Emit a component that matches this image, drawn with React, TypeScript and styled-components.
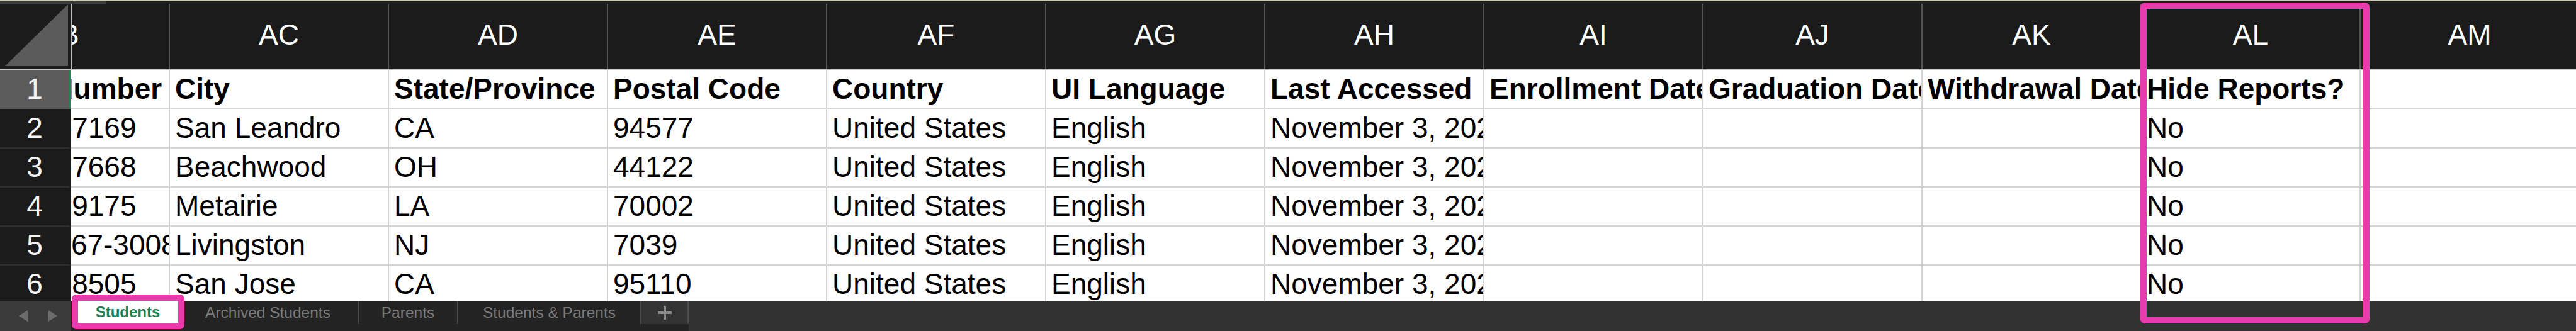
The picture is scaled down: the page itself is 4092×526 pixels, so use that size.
import React from "react";
import styled, { createGlobalStyle } from "styled-components";

const FONT = `"Liberation Sans", Arial, Helvetica, sans-serif`;
const PINK = "#e93cac";

const GlobalStyle = createGlobalStyle`
  html, body { margin: 0; padding: 0; background: #1b1b1b; }
  body { width: 4092px; height: 526px; overflow: hidden; }
  *, *::before, *::after { box-sizing: border-box; }
`;

const Page = styled.div`
  position: relative;
  width: 4092px;
  height: 526px;
  display: flex;
  flex-direction: column;
  overflow: hidden;
  font-family: ${FONT};
  background: #1b1b1b;
`;

const TopEdge = styled.div`
  flex: none;
  height: 6px;
  display: flex;
  border-top: 2px solid #cdc9bb;
  background: #1e1e1e;
`;

const TopEdgeShade = styled.div`
  width: 168px;
  background: #3a3a3a;
`;

const HeaderRow = styled.div`
  flex: none;
  height: 106px;
  display: flex;
  background: #1b1b1b;
  border-bottom: 2px solid #c4c4c4;
`;

const Corner = styled.div`
  flex: none;
  width: 114px;
  border-right: 2px solid #bdbdbd;
  svg { display: block; }
`;

const Viewport = styled.div`
  flex: 1;
  min-width: 0;
  overflow: hidden;
  display: flex;
`;

const Strip = styled.div<{ $offset: number }>`
  flex: none;
  display: flex;
  margin-left: ${(p) => -p.$offset}px;
`;

const ColLetter = styled.div`
  flex: none;
  width: 348px;
  display: flex;
  align-items: center;
  justify-content: center;
  border-right: 2px solid #555;
  padding-bottom: 6px;
  color: #fff;
  font-size: 46px;
  white-space: nowrap;
`;

const Body = styled.div`
  flex: 1;
  min-height: 0;
  overflow: hidden;
  display: flex;
  flex-direction: column;
  background: #fff;
`;

const Row = styled.div`
  flex: none;
  height: 62px;
  display: flex;
`;

const RowNum = styled.div<{ $active?: boolean }>`
  flex: none;
  width: 112px;
  display: flex;
  align-items: center;
  justify-content: center;
  padding-bottom: 2px;
  background: ${(p) => (p.$active ? "#5c5c5c" : "#1b1b1b")};
  border-bottom: 2px solid ${(p) => (p.$active ? "#5c5c5c" : "#2e2e2e")};
  border-right: 2px solid ${(p) => (p.$active ? "#1e8a52" : "#1b1b1b")};
  color: #f4f4f4;
  font-size: 46px;
`;

const Cell = styled.div<{ $bold?: boolean }>`
  flex: none;
  width: 348px;
  display: flex;
  align-items: center;
  padding: 0 0 2px 8px;
  background: #fff;
  border-right: 2px solid #d4d4d4;
  border-bottom: 2px solid #d4d4d4;
  color: #000;
  font-size: 46px;
  font-weight: ${(p) => (p.$bold ? 700 : 400)};
  white-space: nowrap;
  overflow: hidden;
`;

const TabBar = styled.div`
  flex: none;
  height: 48px;
  display: flex;
  background: #323232;
`;

const NavArrows = styled.div`
  flex: none;
  width: 112px;
  display: flex;
  align-items: center;
  gap: 33px;
  padding-left: 30px;
  background: #3b3b3b;
  svg { display: block; }
`;

const TabList = styled.div`
  flex: none;
  display: flex;
  align-items: flex-start;
  padding-left: 11px;
  background: #232323;
`;

const ActiveTab = styled.div`
  flex: none;
  width: 160px;
  height: 35px;
  display: flex;
  align-items: center;
  justify-content: center;
  background: #fff;
  color: #1f8052;
  font-size: 24px;
  font-weight: 700;
  white-space: nowrap;
`;

const Tab = styled.div<{ $w: number; $add?: boolean }>`
  flex: none;
  width: ${(p) => p.$w}px;
  height: 37px;
  display: flex;
  align-items: center;
  justify-content: center;
  border-right: 2px solid #4c4c4c;
  background: ${(p) => (p.$add ? "#333" : "transparent")};
  color: #7b7b7b;
  font-size: 24.5px;
  white-space: nowrap;
  svg { display: block; }
`;

const ColumnHighlight = styled.div`
  position: absolute;
  left: 3400px;
  top: 4px;
  width: 364px;
  height: 510px;
  border: 10px solid ${PINK};
  border-radius: 7px;
  pointer-events: none;
`;

const TabHighlight = styled.div`
  position: absolute;
  left: 114px;
  top: 468px;
  width: 179px;
  height: 55px;
  border: 10px solid ${PINK};
  border-radius: 7px;
  pointer-events: none;
`;

const LETTERS = ["AB", "AC", "AD", "AE", "AF", "AG", "AH", "AI", "AJ", "AK", "AL", "AM"];

const HEADERS = [
  "Phone Number",
  "City",
  "State/Province",
  "Postal Code",
  "Country",
  "UI Language",
  "Last Accessed",
  "Enrollment Date",
  "Graduation Date",
  "Withdrawal Date",
  "Hide Reports?",
  "",
];

const ROWS: string[][] = [
  ["510-555-7169", "San Leandro", "CA", "94577", "United States", "English", "November 3, 2023", "", "", "", "No", ""],
  ["216-555-7668", "Beachwood", "OH", "44122", "United States", "English", "November 3, 2023", "", "", "", "No", ""],
  ["504-555-9175", "Metairie", "LA", "70002", "United States", "English", "November 3, 2023", "", "", "", "No", ""],
  ["+1 973-567-3008", "Livingston", "NJ", "7039", "United States", "English", "November 3, 2023", "", "", "", "No", ""],
  ["408-555-8505", "San Jose", "CA", "95110", "United States", "English", "November 3, 2023", "", "", "", "No", ""],
];

const TABS = [
  { label: "Archived Students", w: 287 },
  { label: "Parents", w: 158 },
  { label: "Students & Parents", w: 291 },
];

const CornerMark = () => (
  <svg width="112" height="104" viewBox="0 0 112 104">
    <polygon points="8,99 108,99 108,1" fill="#5a5a5a" />
  </svg>
);

const ArrowLeft = () => (
  <svg width="14" height="18" viewBox="0 0 14 18">
    <polygon points="14,0 14,18 0,9" fill="#6c6c6c" />
  </svg>
);

const ArrowRight = () => (
  <svg width="14" height="18" viewBox="0 0 14 18">
    <polygon points="0,0 0,18 14,9" fill="#6c6c6c" />
  </svg>
);

const PlusIcon = () => (
  <svg width="22" height="22" viewBox="0 0 22 22">
    <rect x="9" y="0" width="4" height="22" fill="#8a8a8a" />
    <rect x="0" y="9" width="22" height="4" fill="#8a8a8a" />
  </svg>
);

export default function App() {
  return (
    <>
      <GlobalStyle />
      <Page>
        <TopEdge>
          <TopEdgeShade />
        </TopEdge>
        <HeaderRow>
          <Corner>
            <CornerMark />
          </Corner>
          <Viewport>
            <Strip $offset={192}>
              {LETTERS.map((l) => (
                <ColLetter key={l}>{l}</ColLetter>
              ))}
            </Strip>
          </Viewport>
        </HeaderRow>
        <Body>
          <Row>
            <RowNum $active>1</RowNum>
            <Viewport>
              <Strip $offset={190}>
                {HEADERS.map((h, i) => (
                  <Cell key={i} $bold>
                    {h}
                  </Cell>
                ))}
              </Strip>
            </Viewport>
          </Row>
          {ROWS.map((r, ri) => (
            <Row key={ri}>
              <RowNum>{ri + 2}</RowNum>
              <Viewport>
                <Strip $offset={190}>
                  {r.map((v, ci) => (
                    <Cell key={ci}>{v}</Cell>
                  ))}
                </Strip>
              </Viewport>
            </Row>
          ))}
        </Body>
        <TabBar>
          <NavArrows>
            <ArrowLeft />
            <ArrowRight />
          </NavArrows>
          <TabList>
            <ActiveTab>Students</ActiveTab>
            {TABS.map((t) => (
              <Tab key={t.label} $w={t.w}>
                {t.label}
              </Tab>
            ))}
            <Tab $w={75} $add>
              <PlusIcon />
            </Tab>
          </TabList>
        </TabBar>
        <ColumnHighlight />
        <TabHighlight />
      </Page>
    </>
  );
}
